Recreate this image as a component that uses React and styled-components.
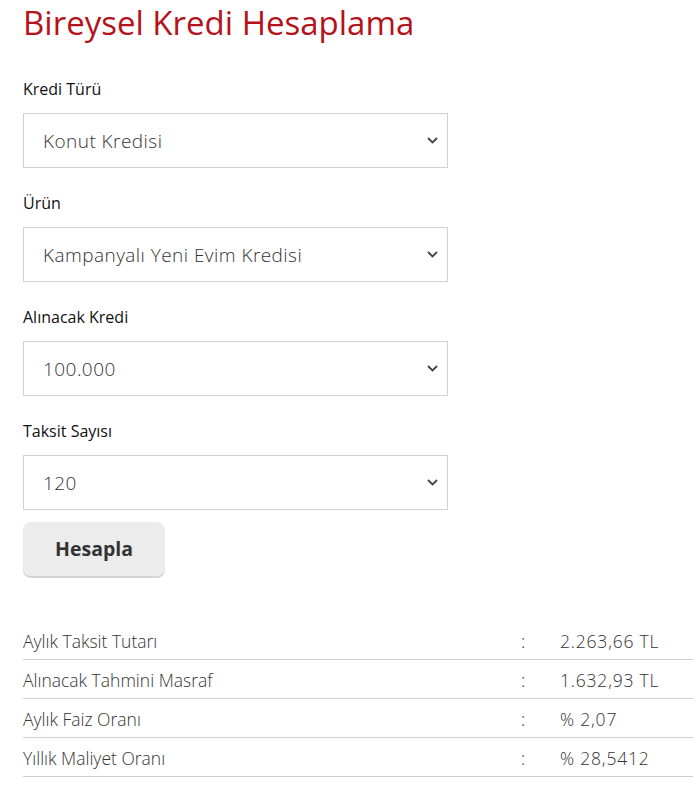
import styled, { createGlobalStyle } from "styled-components"

const GlobalStyle = createGlobalStyle`
	html, body {
		margin: 0;
		padding: 0;
		background: #fff;
		font-family: "Open Sans", "Noto Sans", sans-serif;
		color: #222;
	}
	* { box-sizing: border-box; }
`

const fields = [
	{ label: "Kredi Türü", value: "Konut Kredisi" },
	{ label: "Ürün", value: "Kampanyalı Yeni Evim Kredisi" },
	{ label: "Alınacak Kredi", value: "100.000" },
	{ label: "Taksit Sayısı", value: "120" },
]

const results = [
	{ label: "Aylık Taksit Tutarı", value: "2.263,66 TL" },
	{ label: "Alınacak Tahmini Masraf", value: "1.632,93 TL" },
	{ label: "Aylık Faiz Oranı", value: "% 2,07" },
	{ label: "Yıllık Maliyet Oranı", value: "% 28,5412" },
]

export default function App() {
	return (
		<>
			<GlobalStyle />
			<Page>
				<Title>Bireysel Kredi Hesaplama</Title>
				<Form>
					{fields.map((f) => (
						<Field key={f.label}>
							<Label>{f.label}</Label>
							<SelectBox>
								<span>{f.value}</span>
								<Chevron width="11" height="7" viewBox="0 0 11 7">
									<path d="M1 1l4.5 4.5L10 1" fill="none" stroke="#444" strokeWidth="1.8" />
								</Chevron>
							</SelectBox>
						</Field>
					))}
				</Form>
				<Button>Hesapla</Button>
				<Results>
					{results.map((r) => (
						<Row key={r.label}>
							<Cell>{r.label}</Cell>
							<Colon>:</Colon>
							<Value>{r.value}</Value>
						</Row>
					))}
				</Results>
			</Page>
		</>
	)
}

const Page = styled.div`
	padding-left: 23px;
	padding-bottom: 20px;
`

const Title = styled.h1`
	margin: 3px 0 0;
	font-size: 33px;
	line-height: 40px;
	font-weight: 400;
	color: #b5121b;
`

const Form = styled.div`
	margin-top: 36px;
	display: flex;
	flex-direction: column;
	gap: 25px;
	width: 425px;
`

const Field = styled.div`
	display: flex;
	flex-direction: column;
	gap: 14px;
`

const Label = styled.label`
	font-size: 16px;
	line-height: 20px;
	color: #111;
`

const SelectBox = styled.div`
	height: 55px;
	border: 1px solid #d2d2d2;
	display: flex;
	align-items: center;
	justify-content: space-between;
	padding: 0 9px 0 19px;
	font-size: 19px;
	font-weight: 300;
	letter-spacing: 0.45px;
	color: #333;
`

const Chevron = styled.svg`
	display: block;
`

const Button = styled.button`
	margin-top: 12px;
	width: 142px;
	height: 54px;
	border: none;
	border-radius: 8px;
	background: #ececec;
	box-shadow: 0 2px 0 #d4d4d4;
	font-family: "Open Sans", "Noto Sans", sans-serif;
	font-weight: 700;
	font-size: 19.5px;
	color: #333;
	padding: 0 0 2px;
`

const Results = styled.div`
	margin-top: 45px;
	display: flex;
	flex-direction: column;
`

const Row = styled.div`
	display: grid;
	grid-template-columns: 497px 40px 1fr;
	height: 39px;
	align-items: center;
	border-bottom: 1px solid #cfcfcf;
	padding-top: 1px;
`

const Cell = styled.div`
	font-size: 17.5px;
	font-weight: 300;
	color: #333;
	white-space: nowrap;
`

const Colon = styled(Cell)`
	padding-left: 1px;
`

const Value = styled(Cell)`
	letter-spacing: 0.8px;
`
